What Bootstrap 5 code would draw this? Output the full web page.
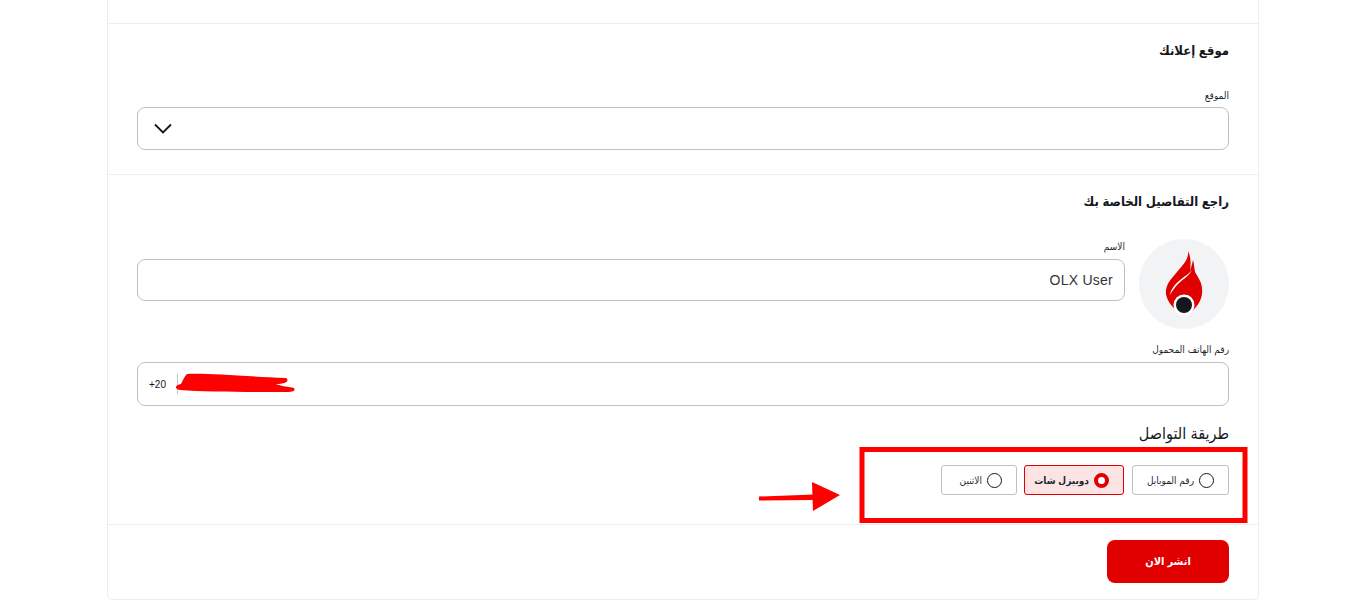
<!DOCTYPE html>
<html lang="ar" dir="rtl">
<head>
<meta charset="utf-8">
<title>OLX</title>
<link href="https://cdn.jsdelivr.net/npm/bootstrap@5.3.0/dist/css/bootstrap.min.css" rel="stylesheet">
<style>
html,body{height:600px;overflow:hidden;background:#fff;}
body{font-family:"Liberation Sans","DejaVu Sans Condensed","DejaVu Sans",sans-serif;color:#14171c;position:relative;}
.sheet{width:1152px;height:600px;margin:0 auto;border:1px solid #eceef0;border-top:0;border-radius:0 0 6px 6px;}
.band{padding:0 29px;border-bottom:1px solid #eceef0;}
.band-top{height:24px;}
.band-loc{height:151px;padding-top:18px;}
.band-me{height:350px;padding-top:18px;}
.band-end{border-bottom:0;padding-top:15px;}
.sec-title{font-size:13px;font-weight:700;line-height:18px;margin:0;}
.fld-label{display:block;font-size:10px;line-height:14px;margin:0 0 5px;color:#242a30;}
.label-loc{margin:29px 0 4px;}
.label-name{margin:1px 0 5px;}
.label-phone{margin:14px 0 5px;}
.fld{height:43px;border:1px solid #bfc1c3;border-radius:8px;font-size:14px;color:#30353a;padding:0 11px;background:#fff;}
.fld-short{height:42px;letter-spacing:.25px;}
.fld-tall{height:44px;}
.person{gap:14px;margin-top:28px;}
.avatar{width:90px;height:90px;background:#f2f3f5;flex:none;}
.code{font-size:10px;color:#14171c;padding:0 11px;}
.code-bar{width:1px;height:20px;background:#bfc1c3;}
.way-title{font-size:16px;line-height:22px;margin:17px 0 0;font-weight:400;color:#14171c;}
.ways{margin-top:20px;}
.way{height:30px;border:1px solid #bfc1c3;border-radius:3px;font-size:10px;background:#fff;padding:0 14px 0 0;gap:5px;color:#242a30;}
.way-a{width:97px;}
.way-b{width:100px;background:#fce4e4;border-color:#e00000;font-weight:700;}
.way-c{width:76px;margin-right:-1px;}
.dot{width:15px;height:15px;border:1.3px solid #14171c;border-radius:50%;flex:none;}
.way-b .dot{border:4px solid #e00000;background:#fff;}
.publish{width:122px;height:43px;background:#e00000;border:0;border-radius:8px;color:#fff;font-size:11px;font-weight:700;}
.publish:hover{background:#e00000;color:#fff;}
.markup{position:absolute;left:0;top:0;width:1366px;height:600px;pointer-events:none;}
</style>
</head>
<body>
<div class="sheet">
  <div class="band band-top"></div>

  <section class="band band-loc">
    <h2 class="sec-title">موقع إعلانك</h2>
    <label class="fld-label label-loc">الموقع</label>
    <div class="fld d-flex align-items-center">
      <svg class="ms-1 me-auto" width="20" height="11" viewBox="0 0 20 11" aria-hidden="true"><path d="M2 1.500 10 9.500 18 1.500" fill="none" stroke="#14171c" stroke-width="1.800"/></svg>
    </div>
  </section>

  <section class="band band-me">
    <h2 class="sec-title">راجع التفاصيل الخاصة بك</h2>
    <div class="d-flex person">
      <div class="avatar rounded-circle">
        <svg width="90" height="90" viewBox="0 0 90 90" aria-hidden="true">
          <path d="M49 12C50 20 44 26 38 33C31 41 26 47 27 55C28 61 32 67 38 72C36 62 40 57 46 56C52 56 56 61 53 72C60 66 64 58 63 50C63 43 58 37 56 33C55 28 55 24 54 21C53 25 52 29 51 32C52 25 52 18 49 12Z" fill="#e00000"/>
          <path d="M31 56C32 47 42 40 49 35C51 33 52 32 53 31C50 37 44 40 39 45C36 48 33 52 31 56Z" fill="#fff"/>
          <circle cx="45" cy="66" r="10.500" fill="#fff"/>
          <circle cx="45" cy="66" r="8" fill="#14171c"/>
        </svg>
      </div>
      <div class="flex-grow-1">
        <label class="fld-label label-name">الاسم</label>
        <div class="fld fld-short d-flex align-items-center">OLX User</div>
      </div>
    </div>
    <label class="fld-label label-phone">رقم الهاتف المحمول</label>
    <div class="fld fld-tall d-flex align-items-center justify-content-end p-0">
      <span class="code-bar"></span>
      <span class="code" dir="ltr">+20</span>
    </div>
    <h3 class="way-title">طريقة التواصل</h3>
    <div class="ways d-flex gap-2">
      <div class="way way-a d-flex align-items-center"><span class="dot"></span><span>رقم الموبايل</span></div>
      <div class="way way-b d-flex align-items-center"><span class="dot"></span><span>دوبيزل شات</span></div>
      <div class="way way-c d-flex align-items-center"><span class="dot"></span><span>الاثنين</span></div>
    </div>
  </section>

  <div class="band band-end">
    <button type="button" class="btn publish d-block">انشر الان</button>
  </div>
</div>

<svg class="markup" viewBox="0 0 1366 600" aria-hidden="true">
  <rect x="862" y="449.500" width="383" height="71" fill="none" stroke="#f00" stroke-width="5"/>
  <path d="M759 496.500 814 494.500 814 500 759 500.500Z" fill="#f00"/>
  <path d="M812 482 840 495 813 511Z" fill="#f00"/>
  <path d="M187 374C205 373 240 376 286 378C290 381 286 384 276 384C280 386 290 387 294 388C296 391 292 392 285 392C250 392 205 392 180 390C173 388 176 385 181 384C183 380 184 377 187 374Z" fill="#f00"/>
</svg>
</body>
</html>
